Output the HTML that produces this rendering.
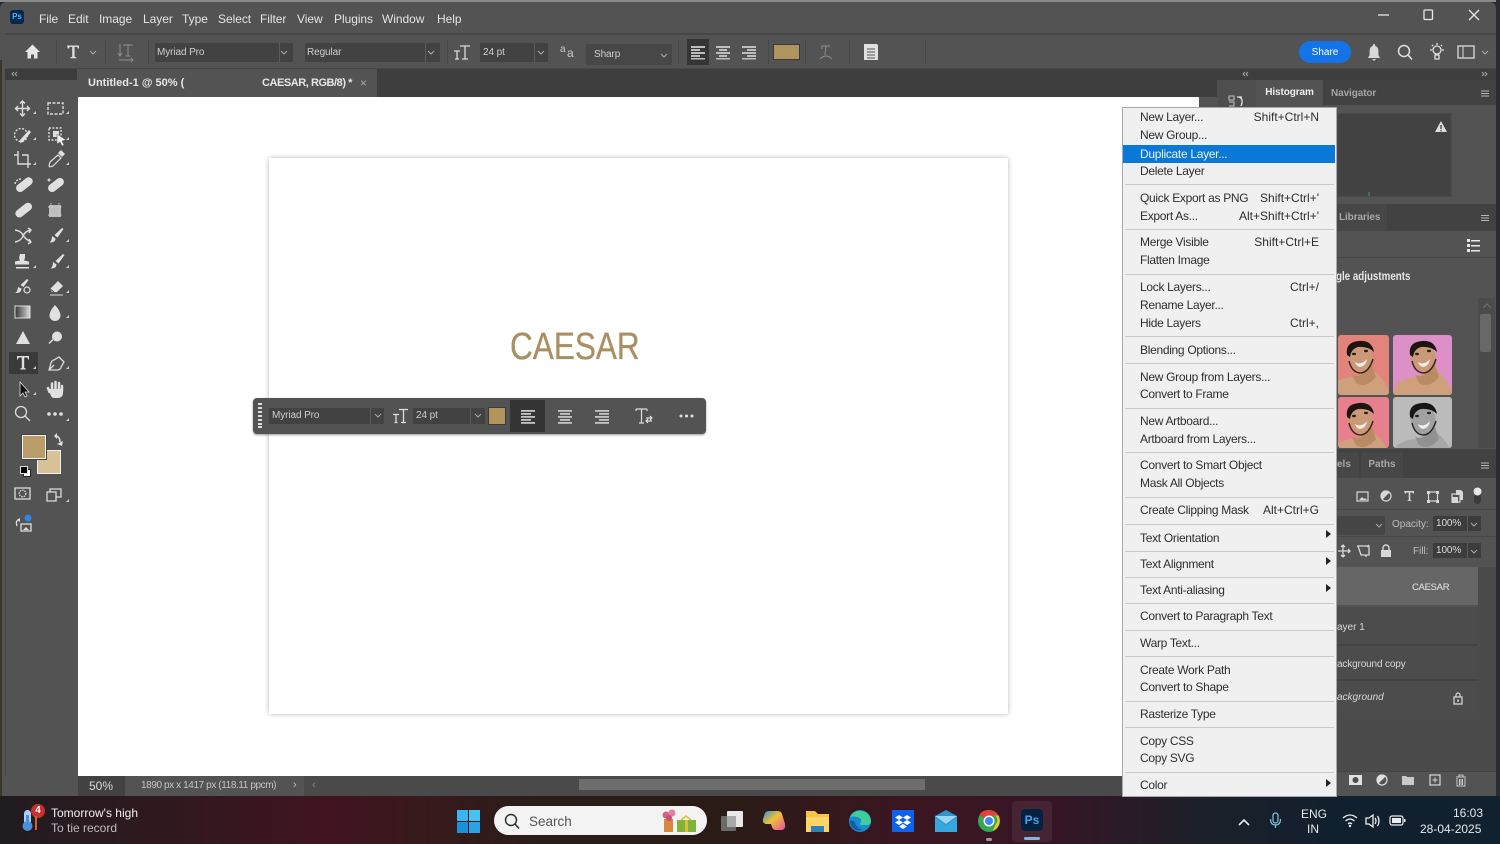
<!DOCTYPE html>
<html><head><meta charset="utf-8"><style>
html,body{margin:0;padding:0;width:1500px;height:844px;overflow:hidden;background:#2a2a2a;font-family:"Liberation Sans",sans-serif}
div,span{position:absolute;box-sizing:border-box}
.t{white-space:nowrap;line-height:16px;height:16px}
.m{color:#e4e4e4;font-size:12px;top:10px;letter-spacing:-.05px}
.b{background:#424242;height:19px;color:#cfcfcf;font-size:10px;line-height:19px;padding-left:2px;white-space:nowrap;letter-spacing:-.1px}
#menu .t{font-size:12px;color:#2e2e2e;left:17px;letter-spacing:-.3px;margin-top:-1px}
#menu .r{left:auto;right:17px;letter-spacing:0}
#menu .s{left:2px;right:2px;height:1px;background:#c9c9c9}
#menu .a{left:203px;width:0;height:0;border-left:5px solid #222;border-top:4.5px solid transparent;border-bottom:4.5px solid transparent;margin-top:-1px}
svg{position:absolute;left:0;top:0}
.lr{left:1337px;width:141px;background:#4c4c4c;border-bottom:2px solid #434343}
.lt{color:#d8d8d8;font-size:10px}
.sp{top:40px;width:1px;height:24px;background:#484848}
</style></head><body>

<!-- window -->
<div style="left:0;top:0;width:1500px;height:2px;background:#8a8a8a"></div>
<div style="left:0;top:2px;width:1496px;height:794px;background:#535353;border-radius:6px 6px 0 0"></div>
<div style="left:0;top:60px;width:2px;height:736px;background:#3a3628"></div>
<div style="left:1496px;top:0;width:4px;height:796px;background:#2b2b30"></div>
<div style="left:5px;top:33px;width:1491px;height:2px;background:#474747"></div>
<div style="left:5px;top:68px;width:1491px;height:1px;background:#474747"></div>
<div style="left:5px;top:80px;width:1px;height:716px;background:#474747"></div>
<div class="sp" style="left:56px"></div><div class="sp" style="left:105px"></div><div class="sp" style="left:148px"></div><div class="sp" style="left:447px"></div><div class="sp" style="left:678px"></div><div class="sp" style="left:768px"></div><div class="sp" style="left:805px"></div><div class="sp" style="left:849px"></div><div class="sp" style="left:925px"></div>

<!-- PS logo -->
<div style="left:10px;top:10px;width:14px;height:14px;background:#04274e;border-radius:3px;color:#4fb3f6;font:bold 8px/14px 'Liberation Sans',sans-serif;text-align:center">Ps</div>
<span class="t m" style="left:39px;top:11px">File</span>
<span class="t m" style="left:68px;top:11px">Edit</span>
<span class="t m" style="left:99px;top:11px">Image</span>
<span class="t m" style="left:143px;top:11px">Layer</span>
<span class="t m" style="left:182px;top:11px">Type</span>
<span class="t m" style="left:218px;top:11px">Select</span>
<span class="t m" style="left:260px;top:11px">Filter</span>
<span class="t m" style="left:297px;top:11px">View</span>
<span class="t m" style="left:334px;top:11px">Plugins</span>
<span class="t m" style="left:382px;top:11px">Window</span>
<span class="t m" style="left:437px;top:11px">Help</span>

<!-- options bar -->
<div class="b" style="left:155px;top:43px;width:138px;">Myriad Pro</div>
<div class="b" style="left:305px;top:43px;width:135px;">Regular</div>
<div class="b" style="left:480px;top:43px;width:68px;padding-left:3px">24 pt</div>
<div class="b" style="left:586px;top:44px;width:86px;height:21px;line-height:22px;background:#474747;padding-left:8px">Sharp</div>
<div style="left:279px;top:43px;width:1px;height:19px;background:#5c5c5c"></div>
<div style="left:425px;top:43px;width:1px;height:19px;background:#5c5c5c"></div>
<div style="left:534px;top:43px;width:1px;height:19px;background:#5c5c5c"></div>
<div style="left:687px;top:39px;width:22px;height:26px;background:#353535"></div>
<div style="left:773px;top:44px;width:27px;height:16px;background:#b1955f;border:1px solid #3a3a3a"></div>
<span class="t" style="left:560px;top:42px;color:#c9c9c9;font-size:10px">a</span>
<span class="t" style="left:567px;top:45px;color:#c9c9c9;font-size:12px">a</span>
<div style="left:1299px;top:41px;width:52px;height:22px;border-radius:11px;background:#1473e6;color:#fff;font-size:10px;line-height:23px;text-align:center">Share</div>

<!-- doc tabs -->
<div style="left:5px;top:69px;width:72px;height:11px;background:#3c3c3c"></div>
<div style="left:78px;top:69px;width:1139px;height:28px;background:#3e3e3e"></div>
<div style="left:78px;top:69px;width:299px;height:28px;background:#535353"></div>
<span class="t" style="left:88px;top:75px;font-size:11px;font-weight:bold;color:#e6e6e6">Untitled-1 @ 50% (</span>
<span class="t" style="left:262px;top:75px;font-size:11px;font-weight:bold;letter-spacing:-.45px;color:#e6e6e6">CAESAR, RGB/8) *</span>
<span class="t" style="left:360px;top:75px;font-size:12px;color:#a8a8a8">×</span>

<!-- canvas -->
<div style="left:78px;top:97px;width:1121px;height:679px;background:#fff"></div>
<div style="left:269px;top:158px;width:739px;height:556px;background:#fff;box-shadow:0 0 5px rgba(0,0,0,.28)"></div>
<div style="left:510px;top:323px;font-size:38px;line-height:48px;color:#a98f62;white-space:nowrap;transform:scaleX(.83);transform-origin:0 0;-webkit-text-stroke:.3px #a98f62">CAESAR</div>

<!-- floating bar -->
<div style="left:253px;top:398px;width:453px;height:36px;background:#535353;border-radius:4px;box-shadow:0 1px 2px rgba(0,0,0,.4)"></div>
<div class="b" style="left:269px;top:408px;width:115px;height:16px;line-height:16px;padding-left:3px">Myriad Pro</div>
<div class="b" style="left:413px;top:408px;width:72px;height:16px;line-height:16px;padding-left:3px">24 pt</div>
<div style="left:370px;top:408px;width:1px;height:16px;background:#5c5c5c"></div>
<div style="left:470px;top:408px;width:1px;height:16px;background:#5c5c5c"></div>
<div style="left:488px;top:407px;width:18px;height:18px;background:#b1955f;border:1px solid #3a3a3a"></div>
<div style="left:510px;top:400px;width:35px;height:32px;background:#353535"></div>

<!-- toolbar -->
<div style="left:9px;top:352px;width:29px;height:22px;background:#3a3a3a"></div>
<div style="left:37px;top:450px;width:24px;height:24px;background:#d9c197;border:1.5px solid #f0f0f0"></div>
<div style="left:22px;top:435px;width:24px;height:24px;background:#b99c68;border:1.5px solid #f0f0f0;box-shadow:0 0 0 1px #444"></div>
<div style="left:23px;top:469px;width:8px;height:8px;background:#fff;border:1px solid #222"></div>
<div style="left:20px;top:466px;width:8px;height:8px;background:#000;border:1px solid #ddd"></div>

<!-- right panel -->
<div style="left:1217px;top:69px;width:279px;height:11px;background:#3e3e3e"></div>
<div style="left:1217px;top:80px;width:39px;height:30px;background:#4e4e4e"></div>
<div style="left:1256px;top:80px;width:240px;height:25px;background:#424242"></div>
<div style="left:1256px;top:80px;width:67px;height:26px;background:#535353;color:#eee;font-size:10px;font-weight:bold;line-height:26px;text-align:center;letter-spacing:-.1px">Histogram</div>
<span class="t" style="left:1331px;top:85px;font-size:10px;font-weight:bold;letter-spacing:-.1px;color:#a5a5a5;margin-top:1px">Navigator</span>
<div style="left:1337px;top:113px;width:115px;height:84px;background:#424242;border:1px solid #4a4a4a;border-right:2px solid #4a4a4a"></div>
<div style="left:1337px;top:204px;width:159px;height:27px;background:#424242"></div>
<div style="left:1337px;top:204px;width:50px;height:27px;background:#474747;color:#a8a8a8;font-size:10px;font-weight:bold;line-height:27px;padding-left:2px;letter-spacing:-.1px">Libraries</div>
<div style="left:1337px;top:257px;width:159px;height:1px;background:#454545"></div>
<span class="t" style="left:1336px;top:269px;font-size:11.5px;font-weight:bold;color:#e6e6e6;transform:scaleX(.85);transform-origin:0 0">gle adjustments</span>
<div style="left:1478px;top:298px;width:17px;height:150px;background:#4b4b4b"></div>
<div style="left:1480px;top:314px;width:11px;height:38px;background:#686868;border-radius:2px"></div>

<!-- layers panel -->
<div style="left:1337px;top:449px;width:159px;height:29px;background:#424242"></div>
<div style="left:1337px;top:452px;width:22px;height:26px;background:#474747;color:#a8a8a8;font-size:10px;font-weight:bold;line-height:25px">els</div>
<div style="left:1361px;top:452px;width:42px;height:26px;background:#474747;color:#a8a8a8;font-size:10px;font-weight:bold;line-height:25px;text-align:center">Paths</div>
<div style="left:1337px;top:509px;width:159px;height:1px;background:#474747"></div>
<div style="left:1337px;top:536px;width:159px;height:1px;background:#474747"></div>
<div style="left:1337px;top:516px;width:48px;height:19px;background:#454545;border-radius:2px"></div>
<span class="t" style="left:1392px;top:517px;font-size:10px;color:#bdbdbd">Opacity:</span>
<div class="b" style="left:1433px;top:516px;width:48px;height:15px;line-height:16px;background:#3c3c3c;padding-left:3px;color:#ddd">100%</div>
<span class="t" style="left:1413px;top:544px;font-size:10px;color:#bdbdbd">Fill:</span>
<div class="b" style="left:1433px;top:543px;width:48px;height:15px;line-height:16px;background:#3c3c3c;padding-left:3px;color:#ddd">100%</div>
<div style="left:1467px;top:516px;width:1px;height:15px;background:#5c5c5c"></div>
<div style="left:1467px;top:543px;width:1px;height:15px;background:#5c5c5c"></div>
<div style="left:1337px;top:567px;width:141px;height:38px;background:#666"></div>
<div class="lr" style="top:607px;height:39px"></div>
<div class="lr" style="top:646px;height:35px"></div>
<div class="lr" style="top:681px;height:33px;border:0"></div>
<div style="left:1337px;top:714px;width:159px;height:57px;background:#4b4b4b"></div>
<div style="left:1478px;top:567px;width:18px;height:204px;background:#4b4b4b"></div>
<span class="t" style="left:1412px;top:580px;font-size:9.5px;letter-spacing:-.3px;color:#e8e8e8">CAESAR</span>
<span class="t lt" style="left:1337px;top:620px">ayer 1</span>
<span class="t lt" style="left:1337px;top:657px;letter-spacing:-.15px">ackground copy</span>
<span class="t lt" style="left:1337px;top:690px;font-style:italic">ackground</span>
<div style="left:1337px;top:771px;width:159px;height:1px;background:#434343"></div>

<!-- status bar -->
<div style="left:5px;top:776px;width:1117px;height:20px;background:#535353"></div>
<div style="left:78px;top:776px;width:47px;height:20px;background:#424242;color:#d8d8d8;font-size:12px;line-height:20px;padding-left:11px">50%</div>
<span class="t" style="left:141px;top:778px;font-size:10px;letter-spacing:-.4px;color:#c5c5c5">1890 px x 1417 px (118.11 ppcm)</span>
<div style="left:304px;top:776px;width:818px;height:20px;background:#4a4a4a"></div>
<div style="left:579px;top:779px;width:346px;height:11px;background:#6d6d6d;border-radius:1px"></div>
<span class="t" style="left:293px;top:777px;font-size:11px;color:#bbb">›</span>
<span class="t" style="left:312px;top:777px;font-size:11px;color:#888">‹</span>

<!-- taskbar -->
<div style="left:0;top:796px;width:1500px;height:48px;background:linear-gradient(90deg,#201c20 0,#2b1a1f 8%,#40131f 22%,#38191c 28%,#2a1d18 36%,#2a1b16 48%,#3a1620 60%,#371525 70%,#1c2029 80%,#10202f 90%,#12212f 100%)"></div>
<div style="left:494px;top:806px;width:213px;height:29px;border-radius:15px;background:#f3f3f3"></div>
<span class="t" style="left:529px;top:814px;font-size:13.5px;color:#555">Search</span>
<span class="t" style="left:51px;top:805px;font-size:12px;color:#f0f0f0">Tomorrow's high</span>
<span class="t" style="left:51px;top:820px;font-size:12px;color:#c0bcbc">To tie record</span>
<div style="left:31px;top:804px;width:14px;height:14px;border-radius:7px;background:#c8322c;color:#fff;font:bold 10px/14px 'Liberation Sans',sans-serif;text-align:center">4</div>
<div style="left:1012px;top:801px;width:40px;height:41px;background:rgba(255,255,255,.07);border-radius:4px"></div>
<div style="left:1021px;top:809px;width:22px;height:22px;background:#04213f;border-radius:4px;color:#41a8f0;font:bold 12px/22px 'Liberation Sans',sans-serif;text-align:center">Ps</div>
<div style="left:1024px;top:837px;width:16px;height:3px;border-radius:2px;background:#7fb6dc"></div>
<div style="left:986px;top:838px;width:6px;height:3px;border-radius:2px;background:#9a9a9a"></div>
<span class="t" style="left:1301px;top:806px;font-size:12px;color:#e8e8e8">ENG</span>
<span class="t" style="left:1307px;top:821px;font-size:12px;color:#e8e8e8">IN</span>
<span class="t" style="left:1453px;top:805px;font-size:12px;color:#e8e8e8">16:03</span>
<span class="t" style="left:1420px;top:821px;font-size:12px;color:#e8e8e8">28-04-2025</span>

<!-- icons -->
<svg width="1500" height="844" viewBox="0 0 1500 844">
<defs>
<clipPath id="c1"><rect width="51" height="60" rx="3"/></clipPath>
<clipPath id="c2"><rect width="51" height="51" rx="3"/></clipPath>
<clipPath id="c3"><rect width="59" height="60" rx="3"/></clipPath>
<clipPath id="c4"><rect width="59" height="51" rx="3"/></clipPath>
<linearGradient id="gr"><stop offset="0" stop-color="#333"/><stop offset="1" stop-color="#ddd"/></linearGradient>
<linearGradient id="cp" x1="0" x2="1" y1="0" y2="1"><stop offset="0" stop-color="#2f8fe0"/><stop offset=".45" stop-color="#f2c230"/><stop offset="1" stop-color="#e04fb0"/></linearGradient>
<g id="man">
 <path d="M-2 64 L4 48 Q14 42 24 42 L40 34 Q54 40 62 64Z" fill="#cfa07c"/>
 <path d="M22 40 Q32 44 42 30 L46 42 Q36 54 26 48Z" fill="#b98a64"/>
 <ellipse cx="30" cy="22" rx="12.500" ry="15.500" transform="rotate(-18 30 22)" fill="#cb9878"/>
 <path d="M17 20 Q15 7 29 6 Q42 5 44 17 Q38 11 28 12 Q21 14 20 22Z" fill="#1c1512"/>
 <path d="M19 26 Q22 38 31 38 Q39 37 43 24" fill="none" stroke="#3a2418" stroke-width="1.500"/>
 <path d="M25 27 Q31 31 37 24 Q36 31 30 32 Q26 31 25 27Z" fill="#f3efe8"/>
 <ellipse cx="24" cy="19" rx="2" ry="1.200" fill="#221"/><ellipse cx="36" cy="16" rx="2" ry="1.200" fill="#221"/>
</g>
</defs>

<!-- thumbnails -->
<g transform="translate(1338,335)"><g clip-path="url(#c1)"><rect width="51" height="60" fill="#e2837c"/><use href="#man" x="-8"/></g></g>
<g transform="translate(1393,335)"><g clip-path="url(#c3)"><rect width="59" height="60" fill="#dd90c8"/><use href="#man" x="0"/></g></g>
<g transform="translate(1338,397)"><g clip-path="url(#c2)"><rect width="51" height="51" fill="#e87f8c"/><use href="#man" x="-8"/></g></g>
<g transform="translate(1393,397)" style="filter:grayscale(1)"><g clip-path="url(#c4)"><rect width="59" height="51" fill="#bbb"/><use href="#man" x="0"/></g></g>

<!-- window controls -->
<g stroke="#e6e6e6" fill="none" stroke-width="1.3">
<path d="M1378 15h11"/><rect x="1424" y="10" width="8.500" height="9.500" rx="1"/><path d="M1469 10l10 10M1479 10l-10 10"/>
</g>

<!-- option bar icons -->
<path d="M25 52l7.500-7.500 7.500 7.500h-2.500v6.500h-3.500v-4h-3v4h-3.500v-6.500z" fill="#e6e6e6"/>
<path d="M67 45.500h12v3h-1.200l-.6-1.600h-2.600v9.800l1.800.6v.9h-6v-.9l1.800-.6v-9.800h-2.600l-.6 1.600h-1.200z" fill="#dcdcdc"/>
<path d="M90 51l3 3 3-3M281 51l3 3 3-3M428 51l3 3 3-3M538 51l3 3 3-3M661 54l3 3 3-3M1482 51l3 3 3-3" fill="none" stroke="#aaa"/>
<g stroke="#8f8f8f" fill="none"><path d="M123 45h10M128 45v11M125.500 56h5M120 44v12M118 53l2 3 2-3M119 60h14M131 58l2 2-2 2"/></g>
<g stroke="#d9d9d9" fill="none" stroke-width="1.3"><path d="M460 46h10M465 46v13M462 59h6M454 51h6M457 51v8M455 59h4"/></g>
<g fill="#bdbdbd"><rect x="691" y="46" width="14" height="2"/><rect x="691" y="49" width="9" height="2"/><rect x="691" y="52" width="14" height="2"/><rect x="691" y="55" width="9" height="2"/><rect x="691" y="58" width="14" height="1.500"/>
<rect x="716" y="46" width="14" height="2"/><rect x="719" y="49" width="8" height="2"/><rect x="716" y="52" width="14" height="2"/><rect x="719" y="55" width="8" height="2"/><rect x="716" y="58" width="14" height="1.500"/>
<rect x="742" y="46" width="14" height="2"/><rect x="747" y="49" width="9" height="2"/><rect x="742" y="52" width="14" height="2"/><rect x="747" y="55" width="9" height="2"/><rect x="742" y="58" width="14" height="1.500"/></g>
<g stroke="#8f8f8f" fill="none"><path d="M821 46h9M826 46l-1 9M822 47v2M820 59q6-6 12 0"/></g>
<path d="M864 44h13l1 1v15h-14z" fill="#e0e0e0"/><g stroke="#555"><path d="M867 49h8M867 52h8M867 55h8M867 58h8"/></g>
<path d="M1374 44q-1 0-1.400 2-3 1-3 5v4l-1.600 3h12l-1.600-3v-4q0-4-3-5-.4-2-1.400-2zM1372 59h4l-2 2z" fill="#d8d8d8"/>
<circle cx="1404" cy="51" r="5.500" fill="none" stroke="#e0e0e0" stroke-width="1.500"/><path d="M1408 55l4 4.500" stroke="#e0e0e0" stroke-width="1.600"/>
<g stroke="#e0e0e0" fill="none" stroke-width="1.300"><circle cx="1437" cy="50" r="4"/><path d="M1435 55h4v4h-4zM1437 43v2M1430 50h2M1442 50h2M1432 45l1 1M1442 45l-1 1"/></g>
<rect x="1458" y="46" width="16" height="12" fill="none" stroke="#dcdcdc" stroke-width="1.300"/><path d="M1463 46v12" stroke="#dcdcdc"/>
<!-- collapse chevrons -->
<g fill="none" stroke="#aaa" stroke-width=".9"><path d="M14 72l-2 2 2 2M17 72l-2 2 2 2M1245 72l-2 2 2 2M1248 72l-2 2 2 2M1482 72l2 2-2 2M1485 72l2 2-2 2"/></g>
<!-- panel menus -->
<g stroke="#b5b5b5"><path d="M1481 91h8M1481 93.500h8M1481 96h8M1481 215.500h8M1481 218h8M1481 220.500h8M1481 463h8M1481 465.500h8M1481 468h8"/></g>
<path d="M1441 121l6 11h-12z" fill="#ddd"/><rect x="1440.300" y="125" width="1.400" height="4" fill="#444"/><rect x="1440.300" y="130" width="1.400" height="1.300" fill="#444"/>
<path d="M1369 192v4" stroke="#4a9e52"/>
<g fill="#e8e8e8"><rect x="1467" y="239" width="3" height="3"/><rect x="1467" y="244" width="3" height="3"/><rect x="1467" y="249" width="3" height="3"/><rect x="1471" y="240" width="9" height="1.500"/><rect x="1471" y="245" width="9" height="1.500"/><rect x="1471" y="250" width="9" height="1.500"/></g>
<path d="M1229 96h5v4h-5zM1229 102h5v4h-5" fill="none" stroke="#c5c5c5"/><path d="M1237 97h5M1239 97q5 2 2 9" fill="none" stroke="#e0e0e0" stroke-width="1.300"/>
<path d="M1483 308l4-4 4 4" fill="none" stroke="#888" opacity=".6"/>

<!-- layers icons -->
<g fill="none" stroke="#d8d8d8" stroke-width="1.200">
<rect x="1357" y="492" width="11" height="9"/>
<circle cx="1386" cy="496" r="5"/>
<rect x="1428.500" y="492" width="9" height="9"/>
<rect x="1452" y="494" width="8" height="8"/>
</g>
<path d="M1359 500l3-3 2 2 1-1 2 2z" fill="#d8d8d8"/>
<path d="M1386 491a5 5 0 0 0-3.500 8.500l7-7a5 5 0 0 0-3.500-1.500z" fill="#d8d8d8"/>
<path d="M1404 491h10v2.500h-1l-.5-1h-2.200v7.500l1.200.5v.5h-4v-.5l1.200-.5v-7.500h-2.200l-.5 1h-1z" fill="#d8d8d8"/>
<g fill="#d8d8d8"><rect x="1427" y="491" width="3" height="3"/><rect x="1436" y="491" width="3" height="3"/><rect x="1427" y="500" width="3" height="3"/><rect x="1436" y="500" width="3" height="3"/><path d="M1452 497h6v6h-6z"/><path d="M1456 490h5l2 2v8h-3v-5h-4z"/></g>
<rect x="1474" y="493" width="7" height="11" rx="3.500" fill="#3c3c3c"/><circle cx="1477.500" cy="491.500" r="4" fill="#e8e8e8"/>
<path d="M1376 524l3 3 3-3" fill="none" stroke="#aaa"/>
<path d="M1471 523l3 3 3-3M1471 550l3 3 3-3" fill="none" stroke="#aaa"/>
<g stroke="#d8d8d8" fill="none" stroke-width="1.300"><path d="M1338 551h12M1343 545v12M1341 547l2-2 2 2M1341 555l2 2 2-2M1348 549l2 2-2 2"/>
<path d="M1358 546h11v9h-8zM1357 546h3M1366 557v-2M1369 545l-2 2"/></g>
<path d="M1381 550h10v7h-10z" fill="#d8d8d8"/><path d="M1383 550v-2a3 3 0 0 1 6 0v2" fill="none" stroke="#d8d8d8" stroke-width="1.400"/>
<g transform="translate(0,146)"><path d="M1454 551h8v7h-8z" fill="none" stroke="#d8d8d8" stroke-width="1.200"/><path d="M1456 551v-2a2 2 0 0 1 4 0v2" fill="none" stroke="#d8d8d8" stroke-width="1.200"/><rect x="1457.300" y="553.500" width="1.500" height="2.500" fill="#d8d8d8"/></g>
<rect x="1349" y="775" width="13" height="10" fill="#e0e0e0"/><circle cx="1355.500" cy="780" r="3" fill="#4b4b4b"/>
<circle cx="1382" cy="780" r="5" fill="none" stroke="#e0e0e0" stroke-width="1.200"/><path d="M1382 775a5 5 0 0 0-3.500 8.500l7-7a5 5 0 0 0-3.500-1.500z" fill="#e0e0e0"/>
<path d="M1402 776h4l1 1h7v8h-12z" fill="#c9c9c9"/>
<rect x="1430" y="775" width="10" height="10" fill="none" stroke="#d8d8d8" stroke-width="1.200"/><path d="M1432.500 780h5M1435 777.500v5" stroke="#d8d8d8"/>
<path d="M1456 777h10M1459 777v-2h4v2M1457 778v8h8v-8M1459.500 779v6M1461 779v6M1462.500 779v6" fill="none" stroke="#c9c9c9"/>

<!-- floating bar icons -->
<g fill="#ddd"><rect x="258" y="403" width="4" height="2"/><rect x="258" y="407" width="4" height="2"/><rect x="258" y="411" width="4" height="2"/><rect x="258" y="415" width="4" height="2"/><rect x="258" y="419" width="4" height="2"/><rect x="258" y="423" width="4" height="2"/><rect x="258" y="426" width="4" height="2"/></g>
<path d="M375 414l3 3 3-3M475 414l3 3 3-3" fill="none" stroke="#aaa"/>
<g stroke="#dedede" fill="none" stroke-width="1.300"><path d="M399 409.500h9M403.500 409.500v13M401 422.500h5M393 414.500h6M396 414.500v8M394.500 422.500h3"/></g>
<g fill="#c4c4c4"><rect x="521" y="410" width="14" height="1.800"/><rect x="521" y="413" width="10" height="1.800"/><rect x="521" y="416" width="14" height="1.800"/><rect x="521" y="419" width="10" height="1.800"/><rect x="521" y="422" width="14" height="1.800"/>
<rect x="558" y="410" width="14" height="1.800"/><rect x="560" y="413" width="10" height="1.800"/><rect x="558" y="416" width="14" height="1.800"/><rect x="560" y="419" width="10" height="1.800"/><rect x="558" y="422" width="14" height="1.800"/>
<rect x="595" y="410" width="14" height="1.800"/><rect x="599" y="413" width="10" height="1.800"/><rect x="595" y="416" width="14" height="1.800"/><rect x="599" y="419" width="10" height="1.800"/><rect x="595" y="422" width="14" height="1.800"/></g>
<path d="M636 409h11M641.500 409v14M639 423h5M636 409v2M647 409v2M646 418h6M646 421h6M650 416l2 2-2 2M648 423l-2-2 2-2" fill="none" stroke="#dedede" stroke-width="1.200"/>
<g fill="#e0e0e0"><circle cx="681" cy="416" r="1.500"/><circle cx="686.500" cy="416" r="1.500"/><circle cx="692" cy="416" r="1.500"/></g>

<!-- toolbar icons -->
<g fill="none" stroke="#dcdcdc" stroke-width="1.400">
 <path d="M22.500 101v15M15.500 108.500h14M20 103.500l2.500-2.500 2.500 2.500M20 113.500l2.500 2.500 2.500-2.500M18 106l-2.500 2.500 2.500 2.500M27 106l2.500 2.500-2.500 2.500"/>
 <rect x="48" y="103" width="15" height="11" stroke-dasharray="3 1.500"/>
 <circle cx="21" cy="135" r="6.500" stroke-dasharray="2 1.500"/>
 <rect x="49" y="128" width="12" height="12" stroke-dasharray="2 1.500"/>
 <path d="M18 151v13h13M14 155h4M22 155h6v13"/>
 <path d="M50 167l-1-1 1-4 8-7 3 3-8 8z" stroke-width="1.200"/>
 <path d="M15 184a6 6 0 0 1 6-5" stroke-dasharray="2 1.200"/>
 <path d="M15 230q6 1 8 5t8 7M15 242q6-1 8-6t8-6M28 228l3 2-2 3M28 244l3-2-2-3"/>
</g>
<g fill="#e0e0e0">
 <path d="M20 140l9-10 2 2-8 10-3 1z"/>
 <rect x="53" y="131" width="6" height="6" fill="#ddd"/>
 <path d="M57 134l9 6-4 1 2 4-2 1-2-4-3 2z" fill="#eee" stroke="#555" stroke-width=".5"/>
 <path d="M58 153l3-3 4 4-3 3z"/>
 <rect x="15" y="181" width="19" height="8" rx="4" transform="rotate(-38 24 185)"/>
 <rect x="47" y="181" width="18" height="8" rx="4" transform="rotate(-38 56 185)"/>
 <path d="M49 178l1 1.500 1.500 .5-1.500 .5-1 1.500-1-1.500-1.500-.5 1.500-.5z"/>
 <rect x="14" y="206.500" width="19" height="8" rx="4" transform="rotate(-38 23 210)"/>
 <rect x="49" y="205" width="12" height="12" fill="#bcbcbc"/>
 <path d="M48 207h14M48 215h14M51 203v15M59 203v15" stroke="#ccc" fill="none" stroke-dasharray="1.500 1.500"/>
 <path d="M62 228l1.500 1-6 8.500-3-2.500zM52 236l3.500 2.500q0 4-6 4q2.500-1.500 2.500-6.500z"/>
 <path d="M20 254h5v4l-1 2.500 5 1v3h-14v-3l5-1-1-2.500zM16 267h13v1.500h-13z"/>
 <path d="M63 254l1.500 1-6 8.500-3-2.500zM53 262l3.500 2.500q0 4-6 4q2.500-1.500 2.500-6.500z"/>
 <path d="M27 279l1.500 1-5 7-3-2zM18 287l3.500 1.500q0 5-6.500 4.500q2.500-1 3-6z"/>
 <path d="M50 289l8-8 5 5-6 6h-5z"/>
 <path d="M55 305q5.500 6 5.500 10.500a5.500 5.500 0 0 1-11 0q0-4.500 5.500-10.500z"/>
 <path d="M23 331l7 13h-14z"/>
 <circle cx="57" cy="336.500" r="5"/><path d="M53.500 340l-4 4-1-1 4-4z"/>
 <path d="M17 356h12v3.500h-1l-.5-2h-3.300v10.500l1.500.5v1h-5.400v-1l1.500-.5v-10.500h-3.300l-.5 2h-1z"/>
 <path d="M20 382v14l3-3 2 4 2-1-2-4h4z" fill="#111" stroke="#ddd" stroke-width=".8"/>
 <path d="M49 389h14v5q-1 4-5 4h-4q-3 0-4-5z"/>
 <circle cx="49" cy="414" r="1.800"/><circle cx="55" cy="414" r="1.800"/><circle cx="61" cy="414" r="1.800"/>
</g>
<g stroke="#e0e0e0" stroke-width="2.500" stroke-linecap="round" fill="none"><path d="M49.500 392l-1.500-4M52 390v-6.500M55.500 390v-8M59 390v-7M62 391v-5"/></g>
<circle cx="27" cy="290" r="3" fill="none" stroke="#e0e0e0" stroke-width="1.200"/>
<path d="M15 306h15v12h-15z" fill="url(#gr)" stroke="#ddd"/>
<path d="M49 288l5 4" stroke="#555" fill="none"/>
<path d="M50 295h13" stroke="#ddd"/>
<g fill="none" stroke="#dcdcdc" stroke-width="1.300">
 <path d="M49 370l2-7q1-3 3-3l5-3 5 5-3 5q0 2-3 3zM49 370l5-5"/>
 <circle cx="21" cy="412" r="5.500"/><path d="M25 416l5 5"/>
 <rect x="15" y="488" width="15" height="11"/><circle cx="22.500" cy="493.500" r="3.300" stroke-dasharray="1.500 1"/>
 <path d="M47 492h9v9h-9zM50 492v-3h11v8h-5"/>
 <path d="M55 436q5 0 5 6" stroke-width="1.500"/>
 <path d="M17 526q-2-6 3-7" />
 <rect x="21" y="524" width="10" height="7"/>
</g>
<path d="M57 433v6l-3-3zM57 444l6-3-1 5z" fill="#e0e0e0"/>
<path d="M17 520l3-2v4zM23 530l3-3 3 3z" fill="#ddd"/>
<circle cx="28" cy="518" r="3.500" fill="#2f86e8"/>
<g fill="#cfcfcf"><path d="M36 114v-3l-3 3zM69 114v-3l-3 3zM36 140v-3l-3 3zM69 140v-3l-3 3zM36 165v-3l-3 3zM69 165v-3l-3 3zM69 242v-3l-3 3zM36 268v-3l-3 3zM69 268v-3l-3 3zM69 293v-3l-3 3zM69 318v-3l-3 3zM36 369v-3l-3 3zM69 369v-3l-3 3zM36 395v-3l-3 3zM69 421v-3l-3 3zM69 502v-3l-3 3z"/></g>

<!-- taskbar icons -->
<g transform="translate(22,806)">
 <rect x="2" y="4" width="7" height="16" rx="3.500" fill="#a9d0f5"/><circle cx="5.500" cy="20" r="5" fill="#4d8ed8"/><rect x="4" y="9" width="3" height="11" fill="#4d8ed8"/>
 <path d="M14 10v14" stroke="#d6602f" stroke-width="2"/>
</g>
<g>
 <rect x="457" y="810" width="11" height="11" fill="#38b6f0"/><rect x="469" y="810" width="11" height="11" fill="#47c2f5"/>
 <rect x="457" y="822" width="11" height="11" fill="#1d8fd8"/><rect x="469" y="822" width="11" height="11" fill="#2aa3e6"/>
</g>
<circle cx="511" cy="820" r="5.500" fill="none" stroke="#333" stroke-width="1.500"/><path d="M515 824l4 4.500" stroke="#333" stroke-width="1.600"/>
<rect x="664" y="819" width="9" height="13" fill="#d78a3b"/><circle cx="666" cy="815" r="3.500" fill="#d96086"/><circle cx="672" cy="813" r="3.500" fill="#e07fa0"/><circle cx="669" cy="818" r="3" fill="#c94d7a"/>
<rect x="677" y="820" width="19" height="12" fill="#7fb33a"/><rect x="685" y="820" width="3" height="12" fill="#d9c13b"/><path d="M681 820l5-4 5 4" fill="none" stroke="#d9c13b" stroke-width="1.500"/>
<rect x="721" y="816" width="15" height="15" rx="1" fill="#6a6a6a"/><rect x="727" y="811" width="16" height="16" rx="1" fill="#e8e8e8"/><rect x="727" y="816" width="9" height="11" fill="#a9a9a9"/>
<path d="M769 811h9q3 0 4 3l3 10q1 5-3 6h-6q-3 0-4-3l-1-3h-5q-4-1-3-5l2-6q1-2 4-2z" fill="url(#cp)"/>
<path d="M806 811h9l3 3h11v18h-23z" fill="#f6c344"/><rect x="806" y="817" width="23" height="15" fill="#fbd567"/><rect x="811" y="826" width="13" height="6" fill="#2f7fb8"/>
<circle cx="860" cy="821" r="11" fill="#1b8ad0"/><path d="M850 817q4-7 11-6 9 1 10 10 0 4-4 4h-6q-2-1 0-3 1-4-4-5-4-1-7 0z" fill="#3fcf9c"/><path d="M855 822q1 6 8 8-7 2-11-3-2-3-2-6 2-1 5 1z" fill="#0d5ea8"/>
<rect x="892" y="810" width="22" height="22" fill="#0e62f0"/><path d="M899 815l4 2.500-4 2.500-4-2.500zM907 815l4 2.500-4 2.500-4-2.500zM899 820l4 2.500-4 2.500-4-2.500zM907 820l4 2.500-4 2.500-4-2.500zM903 824l4 2.500-4 2.500-4-2.500z" fill="#fff"/>
<path d="M935 816l11-6 11 6v16h-22z" fill="#2e95cf"/><path d="M935 816h22l-11 8z" fill="#9ad6f2"/><path d="M935 818l11 7 11-7v14h-22z" fill="#34a8de"/>
<circle cx="989" cy="821" r="11" fill="#34a853"/><path d="M989 810a11 11 0 0 1 9.500 5.500h-9.500a5.500 5.500 0 0 0-5 3l-4.500-4a11 11 0 0 1 9.500-4.500z" fill="#e0433a"/><path d="M998.500 815.500a11 11 0 0 1-6 15.500l4-8a5 5 0 0 0-2-7.500z" fill="#f5bf2e"/><circle cx="989" cy="821" r="5.500" fill="#fff"/><circle cx="989" cy="821" r="4" fill="#4285f4"/>
<path d="M1239 825l5-5 5 5" fill="none" stroke="#eee" stroke-width="1.600"/>
<rect x="1273" y="813" width="5" height="10" rx="2.500" fill="none" stroke="#7cc6de" stroke-width="1.200"/><path d="M1270.500 819q0 6 5 6t5-6M1275.500 825v3" fill="none" stroke="#7cc6de" stroke-width="1.200"/>
<g fill="none" stroke="#eee" stroke-width="1.300"><path d="M1343 818q7-6 14 0M1345.500 821q4.500-4 9 0M1348 824q2-2 4 0"/><path d="M1366 818h3l4-3v12l-4-3h-3zM1375 818q2 3 0 6M1377.500 816q3 5 0 10"/></g>
<circle cx="1350" cy="826" r="1.200" fill="#eee"/>
<rect x="1390" y="816" width="13" height="9" rx="2" fill="none" stroke="#eee" stroke-width="1.200"/><rect x="1392" y="818" width="9" height="5" fill="#eee"/><rect x="1404" y="819" width="1.500" height="3" fill="#eee"/>
</svg>

<!-- context menu -->
<div id="menu" style="left:1122px;top:107px;width:215px;height:690px;background:#f0f0f0;border:1px solid #a8a8a8">
<div style="left:0;top:37px;width:212px;height:18px;background:#0a78d7"></div>
<span class="t" style="top:2px">New Layer...</span><span class="t r" style="top:2px">Shift+Ctrl+N</span>
<span class="t" style="top:20px">New Group...</span>
<span class="t" style="top:39px;color:#e8f3fc">Duplicate Layer...</span>
<span class="t" style="top:56px">Delete Layer</span>
<div class="s" style="top:76px"></div>
<span class="t" style="top:83px">Quick Export as PNG</span><span class="t r" style="top:83px">Shift+Ctrl+'</span>
<span class="t" style="top:101px">Export As...</span><span class="t r" style="top:101px">Alt+Shift+Ctrl+'</span>
<div class="s" style="top:121px"></div>
<span class="t" style="top:127px">Merge Visible</span><span class="t r" style="top:127px">Shift+Ctrl+E</span>
<span class="t" style="top:145px">Flatten Image</span>
<div class="s" style="top:166px"></div>
<span class="t" style="top:172px">Lock Layers...</span><span class="t r" style="top:172px">Ctrl+/</span>
<span class="t" style="top:190px">Rename Layer...</span>
<span class="t" style="top:208px">Hide Layers</span><span class="t r" style="top:208px">Ctrl+,</span>
<div class="s" style="top:228px"></div>
<span class="t" style="top:235px">Blending Options...</span>
<div class="s" style="top:255px"></div>
<span class="t" style="top:262px">New Group from Layers...</span>
<span class="t" style="top:279px">Convert to Frame</span>
<div class="s" style="top:300px"></div>
<span class="t" style="top:306px">New Artboard...</span>
<span class="t" style="top:324px">Artboard from Layers...</span>
<div class="s" style="top:344px"></div>
<span class="t" style="top:350px">Convert to Smart Object</span>
<span class="t" style="top:368px">Mask All Objects</span>
<div class="s" style="top:389px"></div>
<span class="t" style="top:395px">Create Clipping Mask</span><span class="t r" style="top:395px">Alt+Ctrl+G</span>
<div class="s" style="top:416px"></div>
<span class="t" style="top:423px">Text Orientation</span><div class="a" style="top:423px"></div>
<div class="s" style="top:443px"></div>
<span class="t" style="top:449px">Text Alignment</span><div class="a" style="top:450px"></div>
<div class="s" style="top:469px"></div>
<span class="t" style="top:475px">Text Anti-aliasing</span><div class="a" style="top:477px"></div>
<div class="s" style="top:495px"></div>
<span class="t" style="top:501px">Convert to Paragraph Text</span>
<div class="s" style="top:522px"></div>
<span class="t" style="top:528px">Warp Text...</span>
<div class="s" style="top:548px"></div>
<span class="t" style="top:555px">Create Work Path</span>
<span class="t" style="top:572px">Convert to Shape</span>
<div class="s" style="top:593px"></div>
<span class="t" style="top:599px">Rasterize Type</span>
<div class="s" style="top:619px"></div>
<span class="t" style="top:626px">Copy CSS</span>
<span class="t" style="top:643px">Copy SVG</span>
<div class="s" style="top:664px"></div>
<span class="t" style="top:670px">Color</span><div class="a" style="top:672px"></div>
</div>
</body></html>
